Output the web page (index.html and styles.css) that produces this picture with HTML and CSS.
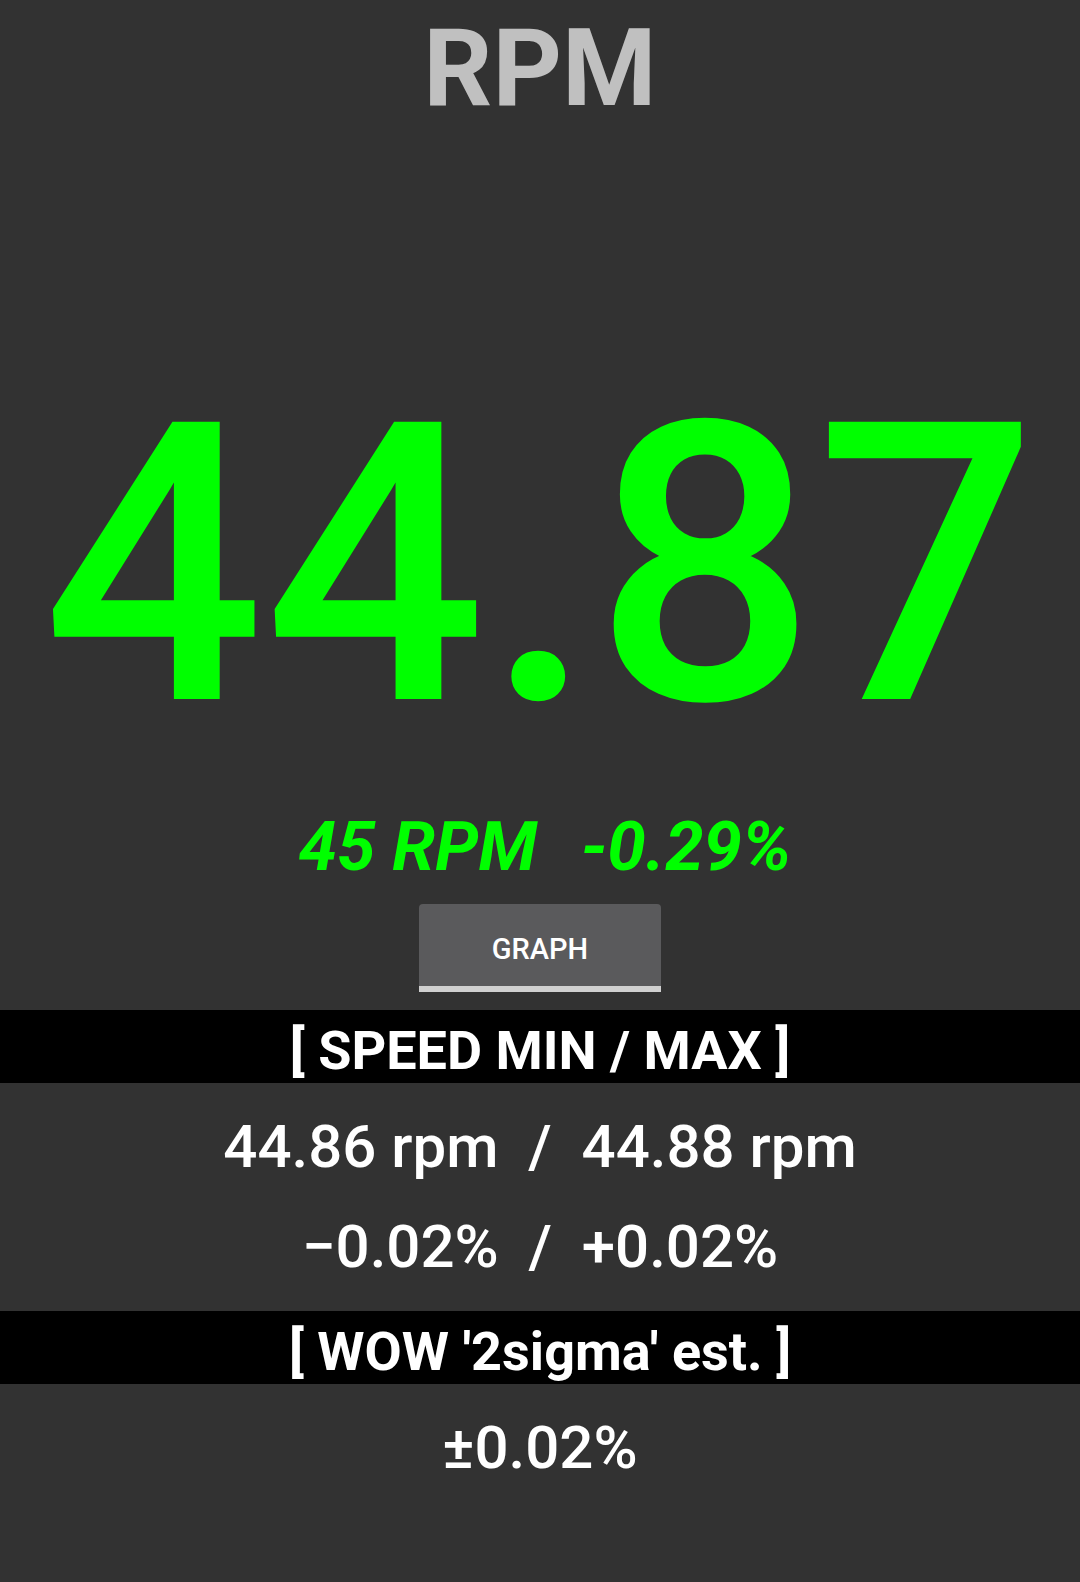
FILE: index.html
```html
<!DOCTYPE html>
<html>
<head lang="en">
    <meta charset="UTF-8">
    <title>RPM</title>
    <link rel="stylesheet" href="styles.css">
</head>
<body>
<div id="screen">
    <div class="title">RPM</div>
    <div class="speed">44.87</div>
    <div class="target">
        <span>45 RPM</span>
        <span>-0.29%</span>
    </div>
    <div class="btn-row">
        <button class="btn" type="button">GRAPH</button>
    </div>
    <div class="head">[ SPEED MIN / MAX ]</div>
    <div class="values">
        <div class="line">44.86 rpm&nbsp;&nbsp;/&nbsp;&nbsp;44.88 rpm</div>
        <div class="line">&minus;0.02%&nbsp;&nbsp;/&nbsp;&nbsp;+0.02%</div>
    </div>
    <div class="head">[ WOW '2sigma' est. ]</div>
    <div class="values">
        <div class="line">&plusmn;0.02%</div>
    </div>
</div>
</body>
</html>
```

FILE: styles.css
```css
*{
    margin: 0;
    padding: 0;
}
html, body{
    background: #323232;
}
body{
    font-family: Roboto, "Noto Sans", sans-serif;
    color: #fff;
    width: 1080px;
    min-height: 1582px;
}
#screen{
    display: flex;
    flex-direction: column;
    align-items: stretch;
    text-align: center;
}

.title{
    font-size: 108px;
    font-weight: 700;
    line-height: 1;
    color: #c0c0c0;
    padding-top: 14px;
}
.speed{
    font-size: 390px;
    font-weight: 500;
    line-height: 1;
    color: #00ff00;
    margin-top: 249px;
}
.target{
    display: flex;
    justify-content: center;
    gap: 44px;
    font-size: 69px;
    font-weight: 700;
    font-style: italic;
    line-height: 1;
    color: #00ff00;
    margin-top: 51px;
    padding-left: 10px;
}

.btn-row{
    display: flex;
    justify-content: center;
    margin-top: 23px;
}
.btn{
    width: 242px;
    height: 88px;
    border: 0;
    border-radius: 4px 4px 0 0;
    background: #5a5a5c;
    border-bottom: 6px solid #d0d0d0;
    color: #fff;
    font-family: Roboto, sans-serif;
    font-size: 29px;
    font-weight: 500;
    padding-top: 8px;
    cursor: pointer;
}

.head{
    background: #000;
    font-size: 54px;
    font-weight: 700;
    line-height: 1;
    padding: 14px 0 5px;
    margin-top: 18px;
}
.head + .values{
    padding: 14px 0;
}
.values + .head{
    margin-top: 0;
}
.line{
    font-size: 60px;
    font-weight: 500;
    line-height: 100px;
}
```
